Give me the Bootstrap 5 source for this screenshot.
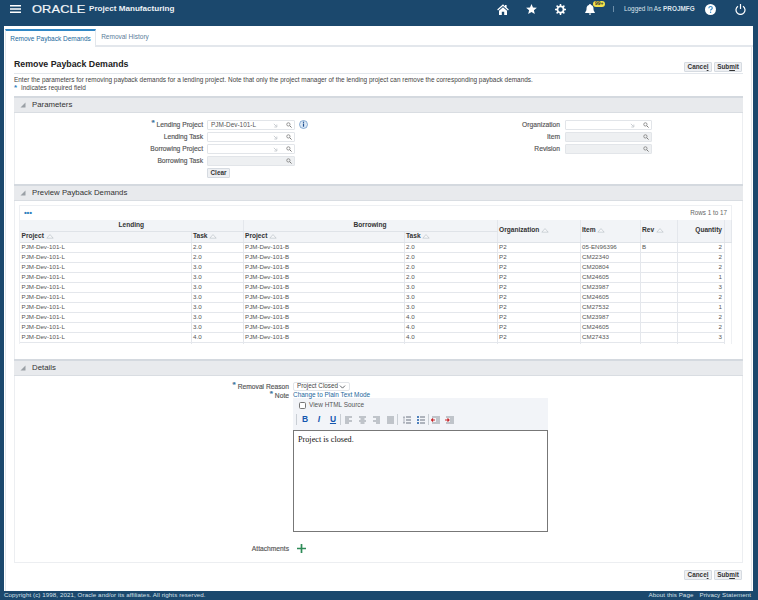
<!doctype html>
<html lang="en"><head><meta charset="utf-8"><title>Remove Payback Demands</title>
<link href="https://cdn.jsdelivr.net/npm/bootstrap@5.3.0/dist/css/bootstrap.min.css" rel="stylesheet">
<style>
html,body{height:600px;overflow:hidden}
body{background:#1b486d;font-family:"Liberation Sans",Arial,sans-serif;font-size:6.45px;line-height:1;color:#444}
.hdr{height:26px;color:#fff;padding-bottom:8px}
.burger{margin-left:10px;width:11px}
.ologo{margin:1px 0 0 11px;font-size:10.5px;letter-spacing:.1px;color:#f2f5f8;width:57px;display:inline-block;transform:scaleX(1.22);transform-origin:left center;-webkit-text-stroke:.2px #f2f5f8}
.oprod{margin-top:1px;font-size:8.1px;font-weight:700;color:#eef2f6}
.hico{width:29px;display:flex;justify-content:center;position:relative}
.hbadge{position:absolute;top:-3px;left:18px;background:#f4e24a;color:#333;font-size:5px;font-weight:700;padding:.5px 2px;border-radius:4px}
.hsep{width:1px;height:6px;background:#6d8ea9;margin:0 10px 0 9px}
.huser{font-size:6.4px;color:#dbe4ec;width:71px;white-space:nowrap}
.hhelp{width:30px}.hpow{width:30px;margin-right:3px}
.shell{height:565px;margin:0 5px 0 4px;background:#fff;padding:3px 0 0 1px}
.tabs{height:18px;border-bottom:2px solid #e3e7ec;font-size:6.5px}
.tabon{width:91px;height:18px;background:#fff;border:1px solid #e3e7ec;border-top:2px solid #2f86c4;border-bottom:0;color:#23689c;justify-content:center;display:flex;align-items:center;padding-top:1px;margin-bottom:-2px;position:relative}
.taboff{width:55px;display:flex;align-items:center;justify-content:center;color:#5c7e9a;padding-left:3px;padding-top:1px}
.pagebody{height:544px;padding:0 8px 0 8px;border-left:1px solid #e3e7ec;border-right:1px solid #e3e7ec;margin-right:1px}
.headbar{height:27px;border-bottom:1px solid #e3e7ec;align-items:flex-end;padding-bottom:1px}
.ptitle{font-size:8.8px;font-weight:700;color:#222;margin:0 0 2px}
.acts{gap:2px;margin-right:1px}
.acts .btn{font-size:6.4px;font-weight:700;line-height:1;height:10px;width:28px;padding:0;background:#eef0f3;border:1px solid #d6dbe1;border-radius:1px;color:#333;box-shadow:none}
.acts-bottom{margin-top:7px}
.intro{margin:3px 0 0;height:5px;white-space:nowrap;font-size:6.44px}
.req{height:11px;padding:3px 0 0 7px;position:relative;margin-bottom:3px}
.star{color:#2f7fbd;font-weight:700;font-size:8px;line-height:1}
.req .star{position:absolute;left:0;top:2px}
.sechead{height:17px;background:#e8eaed;border-top:2px solid #d4d9df;border-bottom:1px solid #d9dde2;font-size:7.8px;font-weight:400;padding-left:6px;gap:6px;color:#333;margin:0}
.secbox{border-left:1px solid #eceef1;border-right:1px solid #eceef1}
.parambody{height:71px;padding-top:7px}
.fgrid{display:grid;grid-template-columns:188px 88px;column-gap:4px;row-gap:2px;align-items:center;align-content:start;width:446px;flex:none}
.fgrid2{grid-template-columns:99px 87px;column-gap:5px;width:auto}
.flabel{text-align:right;color:#555;-webkit-text-stroke:.15px #555;height:10px;line-height:10px;white-space:nowrap;position:relative;font-size:6.7px}
.flabel .star{margin-right:2px;position:relative;top:-2px}
.finput{height:10px;border:1px solid #e2e5e9;background:#fff;display:flex;align-items:center;padding:0 2px 0 3px;color:#555;position:relative;border-radius:1px}
.finput.off{background:#eef0f2}
.finput .txt{flex:1}
.infoi{position:absolute;left:91px;top:-1px}
.clearbtn{grid-column:2;justify-self:start;width:23px;height:10px;padding:0;font-size:6.4px;font-weight:700;line-height:1;background:#eef0f3;border:1px solid #d6dbe1;border-radius:1px;color:#333}
.prevbody{height:158px;padding:4px 0 0 4px}
.tblbox{border:1px solid #eef0f3;border-bottom:0;width:713px}
.tbltool{height:14px;padding:0 4px;justify-content:space-between;font-size:6.3px;color:#666}
.dots{color:#2f7fbd;font-weight:700;font-size:8px;letter-spacing:-.2px}
.paytbl.table{table-layout:fixed;width:711px;margin:0;border-collapse:collapse;font-size:6.2px;color:#555}
.c1{width:171px}.c2{width:52px}.c3{width:161px}.c4{width:93px}.c5{width:83px}.c6{width:60px}.c7{width:37px}.c8{width:47px}.c9{width:7px}
.paytbl.table>:not(caption)>*>*{padding:0 1.5px;height:10px;line-height:1;border:0;border-bottom:1px solid #e4e7ec;border-right:1px solid #e4e7ec;box-shadow:none;background:#fff;color:#555;white-space:nowrap;overflow:hidden;vertical-align:middle}
.paytbl.table>thead>tr>th{background:#f2f4f7;color:#333;font-weight:700;font-size:6.6px;height:11px;border-bottom:1px solid #dfe3e8;border-top:0}
.paytbl.table>tbody>tr>td.gap{border:0;background:#fff}
.paytbl.table>tbody>tr.partial>td{height:2px;border-bottom:0;padding:0}
.paytbl .grp{text-align:center}
.detbody{height:187px;padding-top:6px;border-bottom:1px solid #eceef1}
.dgrid{display:grid;grid-template-columns:274px 255px;column-gap:4px;align-items:start}
.dgrid .flabel{height:9px;line-height:9px}
.reasonsel.form-select{width:57px;height:9px;padding:0 0 0 3px;font-size:6.3px;line-height:1;border:1px solid #e2e5e9;border-radius:2px;color:#444;background-size:7px 6px;background-position:right 3px center;min-height:0}
.plainlink{color:#23689c;text-decoration:none;height:5px;display:block;margin-top:1px;line-height:5px}
.rte{background:#f2f4f8;height:32px;margin-top:1px;padding-top:4px}
.rtecheck{gap:3px;height:7px;padding-left:6px;margin:0;color:#555}
.rtecheck input{width:7px;height:7px;margin:0;border:1px solid #777;border-radius:1px;background:#fff}
.rtebar{height:13px;margin-top:4px;padding-left:3px}
.rsep{width:1px;height:11px;background:#c9ced4;flex:none}
.rbtn{width:14px;display:flex;justify-content:center;font-size:8.5px;font-weight:700;color:#1557b0;flex:none}
.rb1{margin-left:1px}.rb2{margin-left:2px}
.rtearea{height:102px;border:1px solid #777;font-family:"Liberation Serif",serif;font-size:8.2px;color:#111;padding:4px;width:255px;background:#fff;line-height:1.1}
.attach{grid-column:1;text-align:right;margin-top:12px}
.attplus{margin:12px 0 0 4px}
.ftr{height:9px;padding:0 7px 0 4px;font-size:6.2px;color:#d7e1ea;white-space:nowrap;letter-spacing:.08px}
.flinks{gap:6px}
</style></head>
<body>
<svg width="0" height="0" class="position-absolute">
<symbol id="srch" viewBox="0 0 8 8"><circle cx="3.2" cy="3.2" r="2.2" fill="none" stroke="#777" stroke-width="1"/><path d="M5 5l2.4 2.4" stroke="#777" stroke-width="1.3"/></symbol>
<symbol id="lov" viewBox="0 0 6 6"><path d="M1 1l3 3M4.6 1.8v3H1.6" fill="none" stroke="#b9bec4" stroke-width=".9"/></symbol>
<symbol id="sort" viewBox="0 0 9 6"><path d="M4.5 .7L8.3 5H.7z" fill="#f7f8fa" stroke="#b4bac1" stroke-width=".7"/></symbol>
<symbol id="disc" viewBox="0 0 6 6"><path d="M5.5 .5v5h-5z" fill="#9aa0a6"/></symbol>
</svg>

<header class="hdr d-flex align-items-center">
 <svg class="burger" viewBox="0 0 11 8" height="8" aria-hidden="true"><path d="M0 .8h11M0 4h11M0 7.2h11" stroke="#fff" stroke-width="1.4"/></svg>
 <span class="ologo">ORACLE</span><span class="oprod">Project Manufacturing</span>
 <div class="ms-auto d-flex align-items-center">
  <span class="hico"><svg width="12" height="11" viewBox="0 0 12 11"><path d="M6 .3L.2 5.600l.8.800L6 2l5 4.400.8-.8L9.600 3.600V1H8v1.200z" fill="#fff"/><path d="M2 6.700L6 3.200l4 3.500V11H7.200V7.800H4.800V11H2z" fill="#fff"/></svg></span>
  <span class="hico"><svg width="11" height="10" viewBox="0 0 11 10"><path d="M5.500 0l1.500 3.500 3.900.3-3 2.500.9 3.700-3.300-2-3.300 2 .9-3.700-3-2.500 3.900-.3z" fill="#fff"/></svg></span>
  <span class="hico"><svg width="11" height="11" viewBox="0 0 11 11"><circle cx="5.500" cy="5.500" r="3.100" fill="none" stroke="#fff" stroke-width="1.800"/><path d="M5.500 0v2M5.500 9v2M0 5.500h2M9 5.500h2M1.600 1.600L3 3M8 8l1.400 1.400M1.600 9.400L3 8M8 3l1.400-1.400" stroke="#fff" stroke-width="1.500"/></svg></span>
  <span class="hico"><svg width="10" height="11" viewBox="0 0 10 11"><path d="M5 0a1 1 0 0 1 1 1c2 .5 2.500 2 2.500 4 0 1.500.5 2.300 1.300 3.200V9H.2v-.8C1 7.300 1.500 6.500 1.500 5c0-2 .5-3.500 2.500-4a1 1 0 0 1 1-1z" fill="#fff"/><path d="M3.800 9.500h2.400a1.200 1.200 0 0 1-2.400 0z" fill="#fff"/></svg><span class="hbadge">99+</span></span>
  <span class="hsep"></span>
  <span class="huser">Logged In As <b>PROJMFG</b></span>
  <span class="hico hhelp"><svg width="11" height="11" viewBox="0 0 11 11"><circle cx="5.500" cy="5.500" r="5.500" fill="#fff"/><path d="M3.800 4.200c.1-1.100.9-1.700 1.800-1.700 1 0 1.700.6 1.700 1.500 0 1.300-1.700 1.300-1.700 2.600" fill="none" stroke="#2f86c4" stroke-width="1.100"/><circle cx="5.600" cy="8.200" r=".7" fill="#2f86c4"/></svg></span>
  <span class="hico hpow"><svg width="11" height="11" viewBox="0 0 11 11"><path d="M3 2.200a4.500 4.500 0 1 0 5 0" fill="none" stroke="#fff" stroke-width="1.200"/><path d="M5.500 0v5" stroke="#fff" stroke-width="1.200"/></svg></span>
 </div>
</header>

<main class="shell">
 <div class="tabs d-flex">
  <div class="tabon">Remove Payback Demands</div>
  <div class="taboff">Removal History</div>
 </div>
 <div class="pagebody">
  <div class="headbar d-flex justify-content-between">
   <h1 class="ptitle">Remove Payback Demands</h1>
   <div class="acts d-flex"><button class="btn" type="button">Cance<u>l</u></button><button class="btn" type="button">Sub<u>m</u>it</button></div>
  </div>
  <p class="intro">Enter the parameters for removing payback demands for a lending project. Note that only the project manager of the lending project can remove the corresponding payback demands.</p>
  <div class="req"><span class="star">*</span>Indicates required field</div>

  <h2 class="sechead d-flex align-items-center"><svg width="6" height="6"><use href="#disc"/></svg>Parameters</h2>
  <section class="secbox parambody d-flex">
   <div class="fgrid">
    <div class="flabel"><span class="star">*</span>Lending Project</div>
    <div class="finput"><span class="txt">PJM-Dev-101-L</span><svg width="5" height="5" class="me-2"><use href="#lov"/></svg><svg width="6" height="6"><use href="#srch"/></svg>
      <svg class="infoi" width="9" height="9" viewBox="0 0 9 9"><circle cx="4.500" cy="4.500" r="4" fill="#dbe8f5" stroke="#5f8fc4" stroke-width=".7"/><path d="M4.500 3.500v3.200" stroke="#1f4f92" stroke-width="1.200"/><circle cx="4.500" cy="2.200" r=".7" fill="#1f4f92"/></svg></div>
    <div class="flabel">Lending Task</div>
    <div class="finput"><span class="txt"></span><svg width="5" height="5" class="me-2"><use href="#lov"/></svg><svg width="6" height="6"><use href="#srch"/></svg></div>
    <div class="flabel">Borrowing Project</div>
    <div class="finput"><span class="txt"></span><svg width="5" height="5" class="me-2"><use href="#lov"/></svg><svg width="6" height="6"><use href="#srch"/></svg></div>
    <div class="flabel">Borrowing Task</div>
    <div class="finput off"><span class="txt"></span><svg width="6" height="6"><use href="#srch"/></svg></div>
    <button class="clearbtn btn" type="button">Clear</button>
   </div>
   <div class="fgrid fgrid2">
    <div class="flabel">Organization</div>
    <div class="finput"><span class="txt"></span><svg width="5" height="5" class="me-2"><use href="#lov"/></svg><svg width="6" height="6"><use href="#srch"/></svg></div>
    <div class="flabel">Item</div>
    <div class="finput off"><span class="txt"></span><svg width="6" height="6"><use href="#srch"/></svg></div>
    <div class="flabel">Revision</div>
    <div class="finput off"><span class="txt"></span><svg width="6" height="6"><use href="#srch"/></svg></div>
   </div>
  </section>

  <h2 class="sechead d-flex align-items-center"><svg width="6" height="6"><use href="#disc"/></svg>Preview Payback Demands</h2>
  <section class="secbox prevbody">
   <div class="tblbox">
    <div class="tbltool d-flex align-items-center"><span class="dots">•••</span><span>Rows 1 to 17</span></div>
    <table class="table paytbl">
     <colgroup><col class="c1"><col class="c2"><col class="c3"><col class="c4"><col class="c5"><col class="c6"><col class="c7"><col class="c8"><col class="c9"></colgroup>
     <thead>
      <tr><th colspan="2" class="grp">Lending</th><th colspan="2" class="grp">Borrowing</th><th rowspan="2">Organization <svg width="8" height="5"><use href="#sort"/></svg></th><th rowspan="2">Item <svg width="8" height="5"><use href="#sort"/></svg></th><th rowspan="2">Rev <svg width="8" height="5"><use href="#sort"/></svg></th><th rowspan="2" class="text-end">Quantity</th><th rowspan="2"></th></tr>
      <tr><th>Project <svg width="8" height="5"><use href="#sort"/></svg></th><th>Task <svg width="8" height="5"><use href="#sort"/></svg></th><th>Project <svg width="8" height="5"><use href="#sort"/></svg></th><th>Task <svg width="8" height="5"><use href="#sort"/></svg></th></tr>
     </thead>
     <tbody>
      <tr><td>PJM-Dev-101-L</td><td>2.0</td><td>PJM-Dev-101-B</td><td>2.0</td><td>P2</td><td>05-EN96396</td><td>B</td><td class="text-end">2</td><td class="gap"></td></tr>
      <tr><td>PJM-Dev-101-L</td><td>2.0</td><td>PJM-Dev-101-B</td><td>2.0</td><td>P2</td><td>CM22340</td><td></td><td class="text-end">2</td><td class="gap"></td></tr>
      <tr><td>PJM-Dev-101-L</td><td>3.0</td><td>PJM-Dev-101-B</td><td>2.0</td><td>P2</td><td>CM20804</td><td></td><td class="text-end">2</td><td class="gap"></td></tr>
      <tr><td>PJM-Dev-101-L</td><td>3.0</td><td>PJM-Dev-101-B</td><td>2.0</td><td>P2</td><td>CM24605</td><td></td><td class="text-end">1</td><td class="gap"></td></tr>
      <tr><td>PJM-Dev-101-L</td><td>3.0</td><td>PJM-Dev-101-B</td><td>3.0</td><td>P2</td><td>CM23987</td><td></td><td class="text-end">3</td><td class="gap"></td></tr>
      <tr><td>PJM-Dev-101-L</td><td>3.0</td><td>PJM-Dev-101-B</td><td>3.0</td><td>P2</td><td>CM24605</td><td></td><td class="text-end">2</td><td class="gap"></td></tr>
      <tr><td>PJM-Dev-101-L</td><td>3.0</td><td>PJM-Dev-101-B</td><td>3.0</td><td>P2</td><td>CM27532</td><td></td><td class="text-end">1</td><td class="gap"></td></tr>
      <tr><td>PJM-Dev-101-L</td><td>3.0</td><td>PJM-Dev-101-B</td><td>4.0</td><td>P2</td><td>CM23987</td><td></td><td class="text-end">2</td><td class="gap"></td></tr>
      <tr><td>PJM-Dev-101-L</td><td>3.0</td><td>PJM-Dev-101-B</td><td>4.0</td><td>P2</td><td>CM24605</td><td></td><td class="text-end">2</td><td class="gap"></td></tr>
      <tr><td>PJM-Dev-101-L</td><td>4.0</td><td>PJM-Dev-101-B</td><td>4.0</td><td>P2</td><td>CM27433</td><td></td><td class="text-end">3</td><td class="gap"></td></tr>
      <tr class="partial"><td></td><td></td><td></td><td></td><td></td><td></td><td></td><td></td><td class="gap"></td></tr>
     </tbody>
    </table>
   </div>
  </section>

  <h2 class="sechead d-flex align-items-center"><svg width="6" height="6"><use href="#disc"/></svg>Details</h2>
  <section class="secbox detbody">
   <div class="dgrid">
    <div class="flabel"><span class="star">*</span>Removal Reason</div>
    <select class="form-select reasonsel" aria-label="Removal Reason"><option>Project Closed</option></select>
    <div class="flabel"><span class="star">*</span>Note</div>
    <div>
     <a class="plainlink" href="#">Change to Plain Text Mode</a>
     <div class="rte">
      <label class="rtecheck d-flex align-items-center"><input type="checkbox" class="form-check-input">View HTML Source</label>
      <div class="rtebar d-flex align-items-center">
       <span class="rsep"></span>
       <span class="rbtn rb1">B</span><span class="rbtn"><i>I</i></span><span class="rbtn"><u>U</u></span>
       <span class="rsep"></span>
       <span class="rbtn"><svg width="9" height="8"><path d="M1 1h7M1 3h4M1 5h7M1 7h4" stroke="#8d949c"/></svg></span>
       <span class="rbtn"><svg width="9" height="8"><path d="M1 1h7M2.500 3h4M1 5h7M2.500 7h4" stroke="#8d949c"/></svg></span>
       <span class="rbtn"><svg width="9" height="8"><path d="M1 1h7M4 3h4M1 5h7M4 7h4" stroke="#8d949c"/></svg></span>
       <span class="rbtn"><svg width="9" height="8"><path d="M1 1h7M1 3h7M1 5h7M1 7h7" stroke="#8d949c"/></svg></span>
       <span class="rsep"></span>
       <span class="rbtn rb2"><svg width="9" height="8"><path d="M3 1h5M3 4h5M3 7h5M1 .5v2M1 3.500v1M1 5.500v2" stroke="#6b7280"/></svg></span>
       <span class="rbtn"><svg width="9" height="8"><path d="M3 1h5M3 4h5M3 7h5" stroke="#6b7280"/><path d="M0 1h2M0 4h2M0 7h2" stroke="#1d5ca8" stroke-width="1.400"/></svg></span>
       <span class="rsep"></span>
       <span class="rbtn"><svg width="10" height="8"><path d="M1 1h8M5 3h4M5 5h4M1 7h8" stroke="#8d949c"/><path d="M4 4H0M2 2.500L.5 4 2 5.500" stroke="#c8262a" fill="none" stroke-width="1.200"/></svg></span>
       <span class="rbtn"><svg width="10" height="8"><path d="M1 1h8M5 3h4M5 5h4M1 7h8" stroke="#8d949c"/><path d="M0 4h4M2.500 2.500L4 4 2.500 5.500" stroke="#c8262a" fill="none" stroke-width="1.200"/></svg></span>
      </div>
     </div>
     <div class="rtearea">Project is closed.</div>
    </div>
    <div class="flabel attach">Attachments</div>
    <svg class="attplus" width="9" height="9" viewBox="0 0 9 9"><path d="M4.500 0v9M0 4.500h9" stroke="#2e8b57" stroke-width="1.700"/></svg>
   </div>
  </section>
  <div class="acts acts-bottom d-flex justify-content-end"><button class="btn" type="button">Cance<u>l</u></button><button class="btn" type="button">Sub<u>m</u>it</button></div>
 </div>
</main>

<footer class="ftr d-flex justify-content-between align-items-center">
 <span>Copyright (c) 1998, 2021, Oracle and/or its affiliates. All rights reserved.</span>
 <span class="flinks d-flex"><span>About this Page</span><span>Privacy Statement</span></span>
</footer>
</body></html>
